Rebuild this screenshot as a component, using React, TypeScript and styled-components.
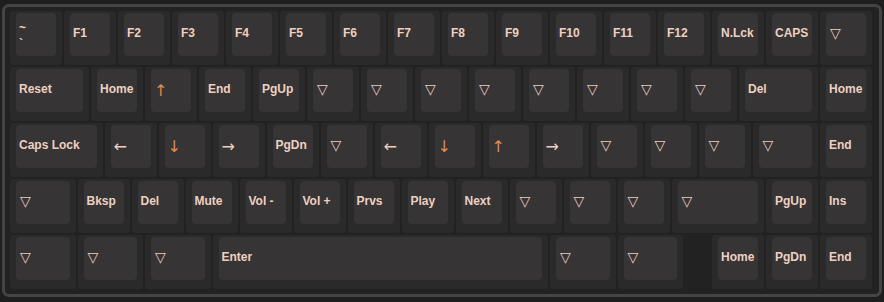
import React from 'react';
import styled, { createGlobalStyle } from 'styled-components';

const UNIT = 54;

const GlobalStyle = createGlobalStyle`
  body {
    margin: 0;
    background: #1e1e1e;
  }
`;

const Board = styled.div`
  margin: 4px 0 0 2px;
  width: 880px;
  box-sizing: border-box;
  border: 3px solid #444444;
  border-radius: 7px;
  background: #222222;
  padding: 4px 5px 5px 5px;
  display: flex;
  flex-direction: column;
  gap: 2px;
`;

const Row = styled.div`
  display: flex;
  gap: 2px;
`;

const KeyCap = styled.div<{ $u: number }>`
  width: ${(p) => p.$u * UNIT - 2}px;
  height: 54px;
  flex-shrink: 0;
  box-sizing: border-box;
  padding: 2px 6px 9px 6px;
  background: #2a2a2a;
  border-radius: 3px;
`;

const Face = styled.div<{ $accent?: boolean }>`
  height: 100%;
  box-sizing: border-box;
  display: flex;
  align-items: center;
  padding: 0 2px 3px 3px;
  background: #363435;
  border-radius: 4px;
  font-family: "Liberation Sans", "DejaVu Sans", sans-serif;
  font-weight: bold;
  font-size: 12px;
  color: ${(p) => (p.$accent ? '#e38a45' : '#eed0c1')};
  white-space: nowrap;
`;

const Triangle = styled.span`
  font-family: "DejaVu Sans", sans-serif;
  font-weight: normal;
  font-size: 14px;
  margin-left: 1px;
`;

// arrow glyphs sit a little lower and larger than the word legends
const Arrow = styled.span`
  font-family: "DejaVu Sans", sans-serif;
  font-weight: normal;
  font-size: 16px;
  margin-top: 3px;
`;

const Dual = styled.div`
  display: flex;
  flex-direction: column;
  line-height: 16px;
  margin-top: 5px;
`;

const Spacer = styled.div<{ $u: number }>`
  width: ${(p) => p.$u * UNIT - 2}px;
  flex-shrink: 0;
`;

type KeyDef = { l: string; u?: number; gap?: boolean };

const T = '▽';

const rows: KeyDef[][] = [
  [
    { l: '~\n`' }, { l: 'F1' }, { l: 'F2' }, { l: 'F3' }, { l: 'F4' }, { l: 'F5' }, { l: 'F6' },
    { l: 'F7' }, { l: 'F8' }, { l: 'F9' }, { l: 'F10' }, { l: 'F11' }, { l: 'F12' },
    { l: 'N.Lck' }, { l: 'CAPS' }, { l: T },
  ],
  [
    { l: 'Reset', u: 1.5 }, { l: 'Home' }, { l: '↑' }, { l: 'End' }, { l: 'PgUp' },
    { l: T }, { l: T }, { l: T }, { l: T }, { l: T }, { l: T }, { l: T }, { l: T },
    { l: 'Del', u: 1.5 }, { l: 'Home' },
  ],
  [
    { l: 'Caps Lock', u: 1.75 }, { l: '←' }, { l: '↓' }, { l: '→' }, { l: 'PgDn' }, { l: T },
    { l: '←' }, { l: '↓' }, { l: '↑' }, { l: '→' }, { l: T }, { l: T }, { l: T },
    { l: T, u: 1.25 }, { l: 'End' },
  ],
  [
    { l: T, u: 1.25 }, { l: 'Bksp' }, { l: 'Del' }, { l: 'Mute' }, { l: 'Vol -' }, { l: 'Vol +' },
    { l: 'Prvs' }, { l: 'Play' }, { l: 'Next' }, { l: T }, { l: T }, { l: T },
    { l: T, u: 1.75 }, { l: 'PgUp' }, { l: 'Ins' },
  ],
  [
    { l: T, u: 1.25 }, { l: T, u: 1.25 }, { l: T, u: 1.25 }, { l: 'Enter', u: 6.25 },
    { l: T, u: 1.25 }, { l: T, u: 1.25 }, { l: '', u: 0.5, gap: true },
    { l: 'Home' }, { l: 'PgDn' }, { l: 'End' },
  ],
];

const Legend = ({ label }: { label: string }) => {
  if (label === T) return <Triangle>{T}</Triangle>;
  if (label.includes('\n')) {
    const [top, bottom] = label.split('\n');
    return (
      <Dual>
        <span>{top}</span>
        <span>{bottom}</span>
      </Dual>
    );
  }
  if ('←↓→↑'.includes(label)) return <Arrow>{label}</Arrow>;
  return <>{label}</>;
};

export default function App() {
  return (
    <>
      <GlobalStyle />
      <Board>
        {rows.map((row, ri) => (
          <Row key={ri}>
            {row.map((k, ki) =>
              k.gap ? (
                <Spacer key={ki} $u={k.u || 1} />
              ) : (
                <KeyCap key={ki} $u={k.u || 1}>
                  <Face $accent={k.l === '↑' || k.l === '↓'}>
                    <Legend label={k.l} />
                  </Face>
                </KeyCap>
              )
            )}
          </Row>
        ))}
      </Board>
    </>
  );
}
